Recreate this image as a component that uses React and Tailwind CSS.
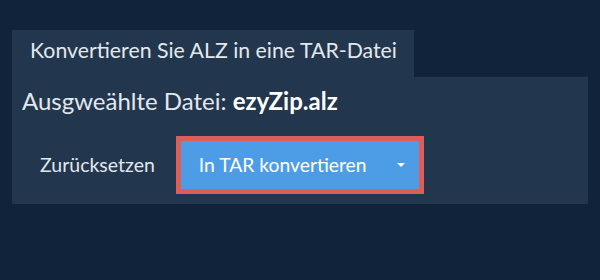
export default function App() {
  return (
    <div className="min-h-[280px] w-[600px] bg-[#11233a] px-[12px] pt-[30px] font-['Lato','Liberation_Sans',sans-serif]">
      <div className="inline-flex h-[47px] items-start bg-[#22364d] pl-[18px] pr-[17px] pt-[6px] text-[21.3px] leading-[28px] text-[#e3e8ee]">
        Konvertieren Sie ALZ in eine TAR-Datei
      </div>
      <div className="h-[127px] bg-[#22364d] px-[10px] pt-[8px]">
        <p className="text-[24px] leading-[32px] text-[#e3e8ee]">
          Ausgweählte Datei: <span className="font-bold text-white">ezyZip.alz</span>
        </p>
        <div className="mt-[19px] flex items-center">
          <button className="ml-[18px] mr-[21px] text-[19.5px] text-[#e3e8ee]">Zurücksetzen</button>
          <button className="flex h-[58px] w-[248px] items-center border-[5px] border-[#dc5e5b] bg-[#4d9de6] pl-[18px] pr-[14px] text-[19.3px] text-white">
            <span>In TAR konvertieren</span>
            <span className="ml-auto h-0 w-0 border-x-[4px] border-t-[4px] border-x-transparent border-t-white" />
          </button>
        </div>
      </div>
    </div>
  );
}
